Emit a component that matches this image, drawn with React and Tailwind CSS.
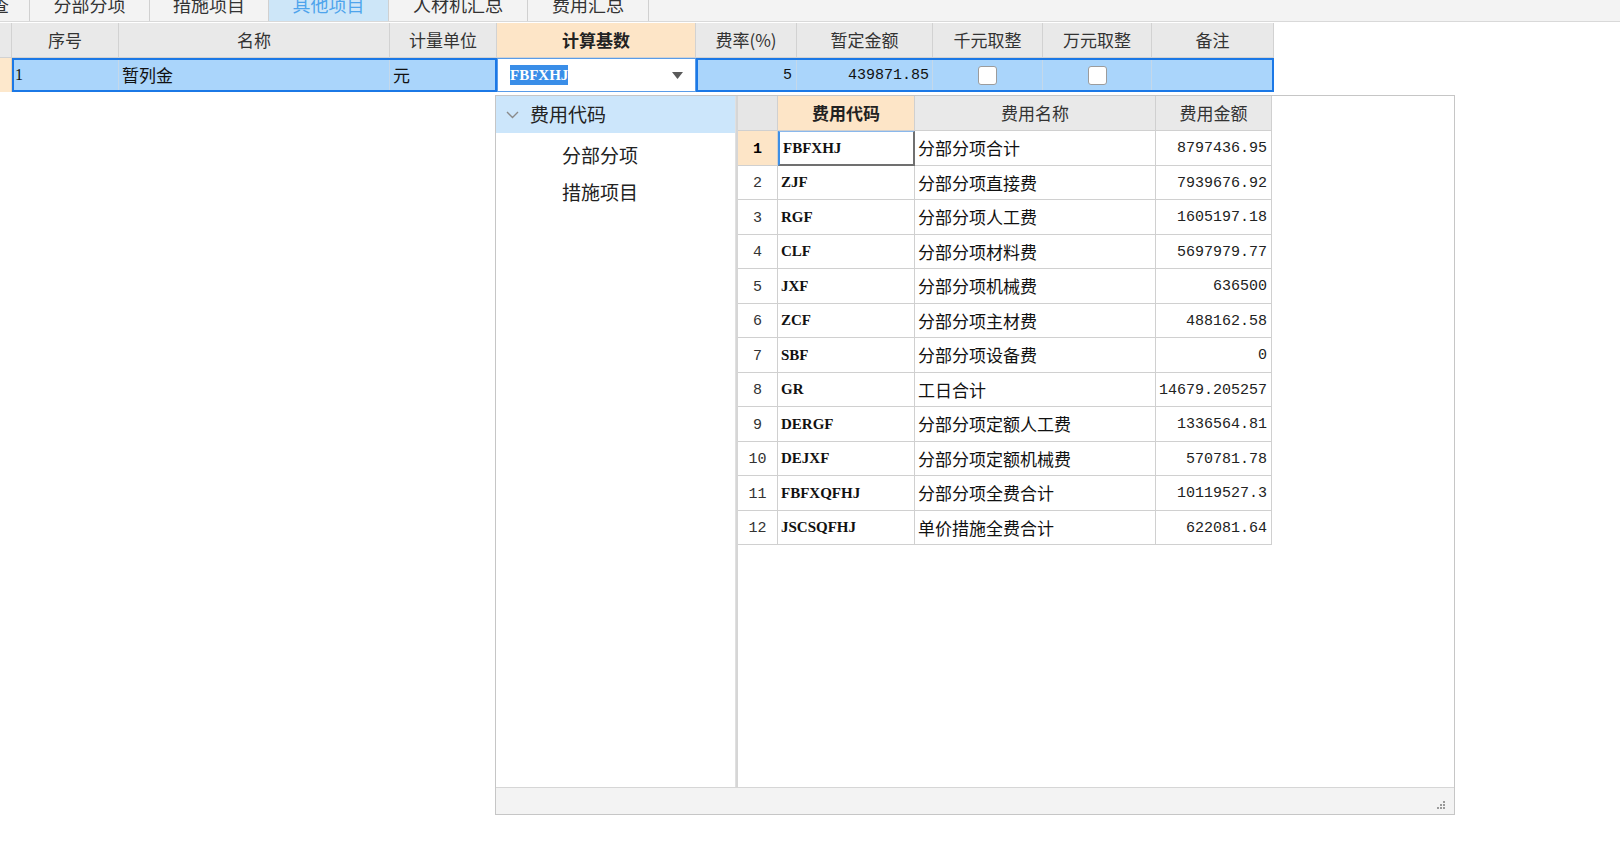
import React from 'react';

const cjk = "font-['Noto_Sans_CJK_SC',sans-serif]";
const mono = "font-['Liberation_Mono','Noto_Sans_CJK_SC',monospace]";
const codeFont = "font-['Liberation_Serif','Noto_Sans_CJK_SC',serif]";

const tabs = [
  { label: '分部分项', w: 'w-[120px]' },
  { label: '措施项目', w: 'w-[119px]' },
  { label: '其他项目', w: 'w-[120px]', active: true },
  { label: '人材机汇总', w: 'w-[139px]' },
  { label: '费用汇总', w: 'w-[121px]' },
];

const feeRows = [
  ['1', 'FBFXHJ', '分部分项合计', '8797436.95'],
  ['2', 'ZJF', '分部分项直接费', '7939676.92'],
  ['3', 'RGF', '分部分项人工费', '1605197.18'],
  ['4', 'CLF', '分部分项材料费', '5697979.77'],
  ['5', 'JXF', '分部分项机械费', '636500'],
  ['6', 'ZCF', '分部分项主材费', '488162.58'],
  ['7', 'SBF', '分部分项设备费', '0'],
  ['8', 'GR', '工日合计', '14679.205257'],
  ['9', 'DERGF', '分部分项定额人工费', '1336564.81'],
  ['10', 'DEJXF', '分部分项定额机械费', '570781.78'],
  ['11', 'FBFXQFHJ', '分部分项全费合计', '10119527.3'],
  ['12', 'JSCSQFHJ', '单价措施全费合计', '622081.64'],
];

const Checkbox = () => (
  <div className="w-[19px] h-[19px] bg-white border border-[#9c9c9c] rounded-[3px]" />
);

const HeaderCell = ({ w, children, peach }) => (
  <div
    className={`${w} h-full flex items-center justify-center border-r border-b border-[#d2d2d2] text-[17px] ${
      peach ? 'bg-[#fde5c7] font-bold text-[#222]' : 'bg-[#e9e9e9] text-[#333]'
    }`}
  >
    {children}
  </div>
);

const FeeGrid = () => (
  <div className="flex flex-col w-[534px]">
    {/* header */}
    <div className="flex h-[35px]">
      <div className="w-[40px] h-full bg-[#e6e6e6] border-r border-b border-[#d0d0d0]" />
      <div className="w-[137px] h-full bg-[#fde5c7] border-r border-b border-[#d0d0d0] flex items-center justify-center text-[17px] font-bold text-[#222]">
        费用代码
      </div>
      <div className="w-[241px] h-full bg-[#e9e9e9] border-r border-b border-[#d0d0d0] flex items-center justify-center text-[17px] text-[#333]">
        费用名称
      </div>
      <div className="w-[116px] h-full bg-[#e9e9e9] border-r border-b border-[#d0d0d0] flex items-center justify-center text-[17px] text-[#333]">
        费用金额
      </div>
    </div>
    {feeRows.map(([no, code, name, amt]) => {
      const sel = no === '1';
      return (
        <div key={no} className="flex h-[34.5px]">
          <div
            className={`w-[40px] h-full border-r border-b border-[#d0d0d0] flex items-center justify-center pt-[4px] text-[15px] ${mono} ${
              sel ? 'bg-[#fde5c7] font-bold text-black' : 'bg-white text-[#333]'
            }`}
          >
            {no}
          </div>
          <div
            className={`w-[137px] h-full flex items-center pl-[3px] text-[15px] font-bold text-[#111] ${codeFont} ${
              sel
                ? 'border-l-2 border-l-[#3d8fe6] border-t border-t-[#8ab8ec] border-r-2 border-r-[#707070] border-b-2 border-b-[#707070] bg-white'
                : 'border-r border-b border-[#d0d0d0] bg-white'
            }`}
          >
            {code}
          </div>
          <div className="w-[241px] h-full border-r border-b border-[#d0d0d0] flex items-center pl-[3px] text-[17px] text-[#111]">
            {name}
          </div>
          <div className={`w-[116px] h-full border-r border-b border-[#d0d0d0] flex items-center justify-end pr-[4px] pt-[3px] text-[15px] text-[#222] ${mono}`}>
            {amt}
          </div>
        </div>
      );
    })}
  </div>
);

const Dropdown = () => (
  <div className={`absolute left-[495px] top-[95px] w-[960px] h-[720px] bg-white border border-[#c6c6c6] flex flex-col ${cjk}`}>
    <div className="flex-1 flex min-h-0">
      {/* tree */}
      <div className="w-[240px] h-full flex flex-col border-r border-[#e0e0e0]">
        <div className="h-[37px] bg-[#cce6fb] flex items-center">
          <svg className="ml-[10px] w-[13px] h-[8px]" viewBox="0 0 13 8" fill="none">
            <path d="M1 1l5.5 5.5L12 1" stroke="#8a8a8a" strokeWidth="1.4" />
          </svg>
          <span className="ml-[11px] text-[19px] text-[#222]">费用代码</span>
        </div>
        <div className="mt-[4px] h-[37px] flex items-center pl-[66px] text-[19px] text-[#222]">分部分项</div>
        <div className="h-[37px] flex items-center pl-[66px] text-[19px] text-[#222]">措施项目</div>
      </div>
      {/* grid */}
      <div className="flex-1 h-full border-l-2 border-[#d6d6d6]">
        <FeeGrid />
      </div>
    </div>
    <div className="h-[27px] bg-[#f3f3f3] border-t border-[#d6d6d6] flex items-end justify-end pr-[8px] pb-[4px]">
      <svg width="10" height="10" viewBox="0 0 10 10">
        <rect x="7" y="1" width="2" height="2" fill="#9a9a9a" />
        <rect x="4" y="4" width="2" height="2" fill="#9a9a9a" />
        <rect x="7" y="4" width="2" height="2" fill="#9a9a9a" />
        <rect x="1" y="7" width="2" height="2" fill="#9a9a9a" />
        <rect x="4" y="7" width="2" height="2" fill="#9a9a9a" />
        <rect x="7" y="7" width="2" height="2" fill="#9a9a9a" />
      </svg>
    </div>
  </div>
);

export default function App() {
  return (
    <div className={`relative w-[1620px] h-[847px] bg-white overflow-hidden ${cjk}`}>
      {/* tab strip */}
      <div className="h-[22px] bg-[#f3f3f3] border-b border-[#d9d9d9] flex overflow-hidden">
        <div className="w-[30px] h-full border-r border-[#d0d0d0] overflow-hidden flex justify-start">
          <span className="-mt-[8px] -ml-[9px] leading-[24px] text-[18px] text-[#333] whitespace-nowrap">查</span>
        </div>
        {tabs.map((t) => (
          <div
            key={t.label}
            className={`${t.w} h-full border-r border-[#d0d0d0] flex justify-center overflow-hidden ${
              t.active ? 'bg-[#cde6f8] text-[#4ea4ec]' : 'text-[#333]'
            }`}
          >
            <span className="-mt-[8px] leading-[24px] text-[18px] whitespace-nowrap">{t.label}</span>
          </div>
        ))}
      </div>

      {/* main table */}
      <div className="mt-[1px] w-[1274px]">
        <div className="flex h-[35px]">
          <HeaderCell w="w-[12px]" />
          <HeaderCell w="w-[107px]">序号</HeaderCell>
          <HeaderCell w="w-[271px]">名称</HeaderCell>
          <HeaderCell w="w-[107px]">计量单位</HeaderCell>
          <HeaderCell w="w-[199px]" peach>计算基数</HeaderCell>
          <HeaderCell w="w-[101px]">费率(%)</HeaderCell>
          <HeaderCell w="w-[136px]">暂定金额</HeaderCell>
          <HeaderCell w="w-[110px]">千元取整</HeaderCell>
          <HeaderCell w="w-[109px]">万元取整</HeaderCell>
          <HeaderCell w="w-[122px]">备注</HeaderCell>
        </div>
        <div className="flex h-[34px]">
          <div className="w-[12px] h-full bg-[#fde8cc] border-r border-[#e8d2b4]" />
          <div className="w-[485px] h-full border-2 border-[#1b78e6] bg-[#aad5fb] flex text-[17px] text-[#111]">
            <div className="w-[105px] h-full border-r border-[#c4d8ea] flex items-center pl-[1px] text-[16px] font-['Liberation_Serif',serif]">1</div>
            <div className="w-[271px] h-full border-r border-[#c4d8ea] flex items-center pl-[3px]">暂列金</div>
            <div className="flex-1 h-full flex items-center pl-[3px]">元</div>
          </div>
          <div className="w-[199px] h-full bg-white border border-[#5a9ce8] flex items-center pl-[12px] pr-[12px]">
            <span className={`bg-[#3a8ee8] text-white text-[15px] font-bold leading-[20px] ${codeFont}`}>FBFXHJ</span>
            <svg className="ml-auto" width="11" height="7" viewBox="0 0 11 7">
              <path d="M0 0h11L5.5 7z" fill="#5a5a5a" />
            </svg>
          </div>
          <div className="w-[578px] h-full border-2 border-[#1b78e6] bg-[#aad5fb] flex text-[#111]">
            <div className={`w-[99px] h-full border-r border-[#c4d8ea] flex items-center justify-end pr-[4px] pt-[2px] text-[15px] ${mono}`}>5</div>
            <div className={`w-[136px] h-full border-r border-[#c4d8ea] flex items-center justify-end pr-[3px] pt-[2px] text-[15px] ${mono}`}>439871.85</div>
            <div className="w-[110px] h-full border-r border-[#c4d8ea] flex items-center justify-center"><Checkbox /></div>
            <div className="w-[109px] h-full border-r border-[#c4d8ea] flex items-center justify-center"><Checkbox /></div>
            <div className="flex-1 h-full" />
          </div>
        </div>
      </div>

      <Dropdown />
    </div>
  );
}
